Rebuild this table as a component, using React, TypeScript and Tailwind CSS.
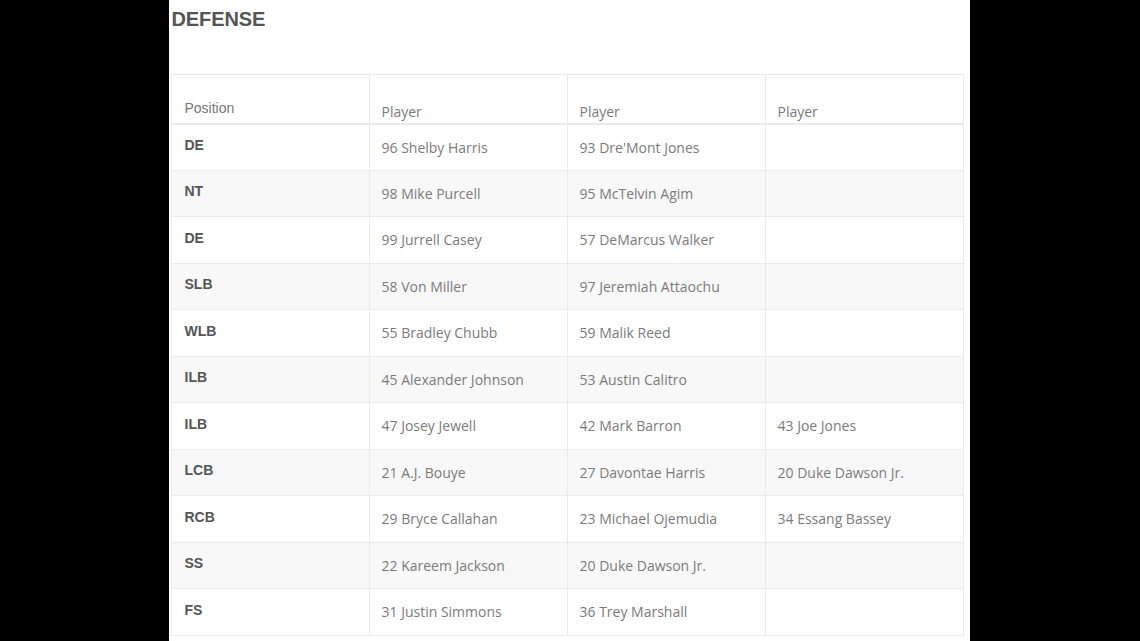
const rows: [string, string, string, string][] = [
  ["DE", "96 Shelby Harris", "93 Dre'Mont Jones", ""],
  ["NT", "98 Mike Purcell", "95 McTelvin Agim", ""],
  ["DE", "99 Jurrell Casey", "57 DeMarcus Walker", ""],
  ["SLB", "58 Von Miller", "97 Jeremiah Attaochu", ""],
  ["WLB", "55 Bradley Chubb", "59 Malik Reed", ""],
  ["ILB", "45 Alexander Johnson", "53 Austin Calitro", ""],
  ["ILB", "47 Josey Jewell", "42 Mark Barron", "43 Joe Jones"],
  ["LCB", "21 A.J. Bouye", "27 Davontae Harris", "20 Duke Dawson Jr."],
  ["RCB", "29 Bryce Callahan", "23 Michael Ojemudia", "34 Essang Bassey"],
  ["SS", "22 Kareem Jackson", "20 Duke Dawson Jr.", ""],
  ["FS", "31 Justin Simmons", "36 Trey Marshall", ""],
];

const body = "font-['Open_Sans',sans-serif] text-[14px] text-[#7b7b7b]";

export default function App() {
  return (
    <div className="flex h-[641px] w-[1140px] justify-center overflow-hidden bg-black">
      <div className="ml-[-2px] flex h-full w-[801px] flex-col bg-white pl-[2px] pt-[9px]">
        <h2 className="pl-[1px] font-['Liberation_Sans',sans-serif] text-[20px] font-bold leading-[20px] tracking-[-0.1px] text-[#555]">
          DEFENSE
        </h2>
        <table className="mt-[45px] w-[793px] table-fixed border-collapse">
          <colgroup>
            <col className="w-[198px]" />
            <col className="w-[198px]" />
            <col className="w-[198px]" />
            <col className="w-[198px]" />
          </colgroup>
          <thead>
            <tr className="h-[49px] border-b-2 border-[#ebebeb]">
              <th className="border border-b-2 border-[#ebebeb] px-[13px] pb-[5px] text-left align-bottom font-['Liberation_Sans',sans-serif] text-[14px] font-normal leading-[20px] text-[#777]">
                Position
              </th>
              {["Player", "Player", "Player"].map((h, i) => (
                <th
                  key={i}
                  className={`border border-b-2 border-[#ebebeb] pl-[12px] pr-[13px] pb-[1px] text-left align-bottom font-normal leading-[20px] ${body}`}
                >
                  {h}
                </th>
              ))}
            </tr>
          </thead>
          <tbody>
            {rows.map((r, i) => (
              <tr key={i} className={i % 2 === 1 ? "bg-[#f8f8f8]" : "bg-white"}>
                <td className="h-[46.5px] border border-[#ebebeb] px-[13px] pb-[3px] align-middle font-['Liberation_Sans',sans-serif] text-[14px] font-bold text-[#555]">
                  {r[0]}
                </td>
                {r.slice(1).map((p, j) => (
                  <td
                    key={j}
                    className={`h-[46.5px] border border-[#ebebeb] pl-[12px] pr-[13px] align-middle ${body}`}
                  >
                    {p}
                  </td>
                ))}
              </tr>
            ))}
          </tbody>
        </table>
      </div>
    </div>
  );
}
